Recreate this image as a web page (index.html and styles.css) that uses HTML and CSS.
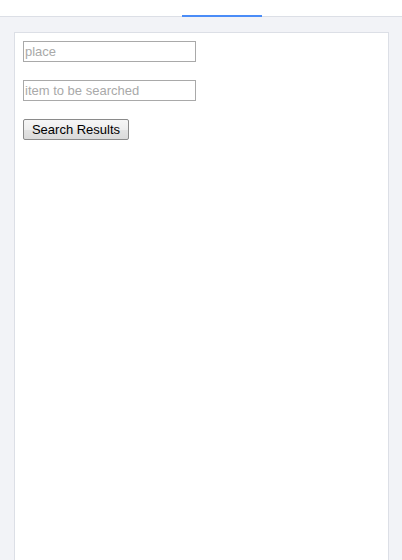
FILE: index.html
```html
<!DOCTYPE html>
<html>
<head>
<meta charset="utf-8">
<link rel="stylesheet" href="styles.css">
</head>
<body>
<header class="topbar">
  <div class="tab-indicator"></div>
</header>
<main class="card">
  <form class="search-form">
    <input class="field" type="text" placeholder="place">
    <input class="field" type="text" placeholder="item to be searched">
    <button class="btn" type="button">Search Results</button>
  </form>
</main>
</body>
</html>
```
FILE: styles.css
```css
html, body {
  margin: 0;
  padding: 0;
  height: 100%;
}
body {
  background: #f2f3f7;
  font-family: "Liberation Sans", Arial, sans-serif;
  overflow: hidden;
}
.topbar {
  position: relative;
  height: 16px;
  background: #ffffff;
  border-bottom: 1px solid #dcdfe6;
}
.tab-indicator {
  position: absolute;
  left: 182px;
  width: 80px;
  bottom: -1px;
  height: 2px;
  background: #4a8cf7;
}
.card {
  margin: 15px 13px 0 14px;
  background: #ffffff;
  border: 1px solid #dcdfe6;
  border-bottom: 0;
  height: calc(100vh - 32px);
  box-sizing: border-box;
  padding: 8px;
}
.search-form {
  display: flex;
  flex-direction: column;
  align-items: flex-start;
  gap: 18px;
}
.field {
  box-sizing: border-box;
  width: 173px;
  height: 21px;
  margin: 0;
  padding: 1px 1px;
  border: 1px solid #a9a9a9;
  font-family: "Liberation Sans", Arial, sans-serif;
  font-size: 13px;
  color: #000;
  outline: none;
}
.field::placeholder {
  color: #a9a9a9;
}
.btn {
  box-sizing: border-box;
  height: 21px;
  width: 106px;
  margin: 0;
  padding: 0 6px;
  border: 1px solid #8a8a8a;
  border-radius: 2px;
  background: linear-gradient(#f6f6f6, #eeeeee 50%, #e3e3e3 50%, #dadada);
  font-family: "Liberation Sans", Arial, sans-serif;
  font-size: 13px;
  color: #000;
}
```
